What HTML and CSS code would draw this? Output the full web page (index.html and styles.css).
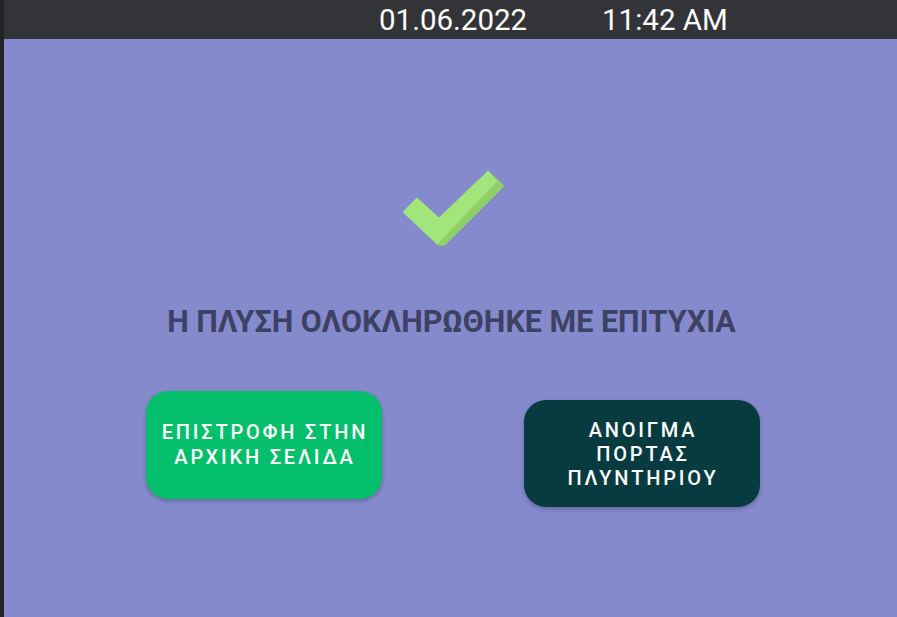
FILE: index.html
```html
<!DOCTYPE html>
<html lang="el">
<head>
<meta charset="utf-8">
<title>Πλύση</title>
<link rel="stylesheet" href="styles.css">
</head>
<body>
<div class="screen">
  <header class="topbar">
    <span class="date">01.06.2022</span>
    <span class="time">11:42 AM</span>
  </header>
  <main class="content">
    <svg class="check" width="104" height="80" viewBox="400 168 104 80" aria-hidden="true">
      <polygon class="shade" points="488,171 504,186 445,245 437,245" />
      <polygon class="face" points="403,212 417,198 439,218 488,171 497,181 437,244" />
    </svg>
    <h1 class="message">Η ΠΛΥΣΗ ΟΛΟΚΛΗΡΩΘΗΚΕ ΜΕ ΕΠΙΤΥΧΙΑ</h1>
    <div class="actions">
      <button class="btn btn-home">ΕΠΙΣΤΡΟΦΗ ΣΤΗΝ<br>ΑΡΧΙΚΗ ΣΕΛΙΔΑ</button>
      <button class="btn btn-door">ΑΝΟΙΓΜΑ<br>ΠΟΡΤΑΣ<br>ΠΛΥΝΤΗΡΙΟΥ</button>
    </div>
  </main>
</div>
</body>
</html>
```
FILE: styles.css
```css
* { box-sizing: border-box; }
html, body { margin: 0; padding: 0; }
body {
  width: 897px;
  height: 617px;
  overflow: hidden;
  background: #858acd;
  font-family: Roboto, "Noto Sans", sans-serif;
}
.screen {
  width: 897px;
  height: 617px;
  border-left: 4px solid #222326;
  display: flex;
  flex-direction: column;
}
.topbar {
  height: 39px;
  background: #333438;
  display: flex;
  align-items: center;
  padding-left: 375px;
  color: #ffffff;
  font-size: 29.5px;
  font-weight: 400;
}
.date { width: 223px; }
.content {
  flex: 1;
  display: flex;
  flex-direction: column;
  align-items: center;
  padding-top: 129px;
}
.check {
  display: block;
  margin-left: 2px;
}
.check .face { fill: #a2e57a; stroke: #a2e57a; stroke-width: 1; stroke-linejoin: round; }
.check .shade { fill: #8fd068; stroke: #8fd068; stroke-width: 1; stroke-linejoin: round; }
.message {
  margin: 56px 0 0 2px;
  font-size: 30.5px;
  font-weight: 700;
  color: #3d4163;
  line-height: 36px;
}
.actions {
  margin-top: 51px;
  margin-left: 4px;
  display: flex;
  align-items: flex-start;
  gap: 142px;
}
.btn {
  width: 236px;
  border: none;
  border-radius: 22px;
  color: #ffffff;
  font-family: Roboto, "Noto Sans", sans-serif;
  font-size: 20px;
  font-weight: 500;
  letter-spacing: 2.8px;
  line-height: 25px;
  text-align: center;
  box-shadow: 0 2px 4px rgba(0, 0, 0, 0.25);
  padding: 0 0 0 3px;
}
.btn-home {
  height: 108px;
  background: #03bf6c;
}
.btn-door {
  height: 107px;
  margin-top: 9px;
  background: #073b40;
  line-height: 24px;
}
```
